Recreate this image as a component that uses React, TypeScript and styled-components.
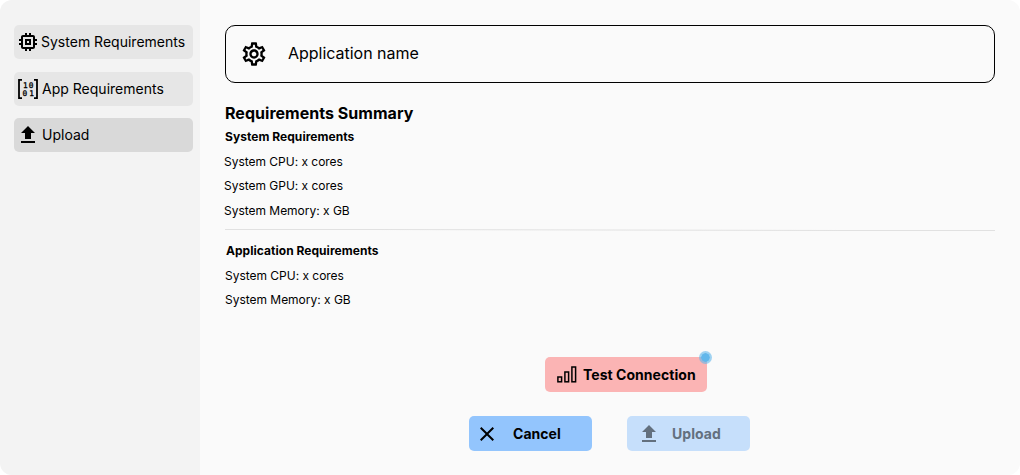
import React from "react";
import styled, { createGlobalStyle } from "styled-components";
import { MdClose, MdMemory, MdOutlineSettings, MdUpload } from "react-icons/md";

const GlobalStyle = createGlobalStyle`
  * { box-sizing: border-box; }
  body { margin: 0; background: #fff; font-family: Inter, "Liberation Sans", sans-serif; color: #000; }
  svg { display: block; flex: none; }
`;

const Shell = styled.div`
  display: flex;
  width: 1020px;
  height: 475px;
  border-radius: 12px;
  overflow: hidden;
  background: #fafafa;
`;

const Sidebar = styled.nav`
  display: flex;
  flex-direction: column;
  width: 200px;
  padding: 25px 7px 0 14px;
  background: #f3f3f3;
`;

const NavItem = styled.button<{ $active?: boolean; $gap: number; $inset: number; $after?: number }>`
  display: flex;
  align-items: center;
  flex: none;
  height: 34px;
  margin: 0 0 ${(p) => p.$after ?? 0}px;
  padding: 0 0 0 ${(p) => p.$inset}px;
  gap: ${(p) => p.$gap}px;
  border: 0;
  border-radius: 5px;
  background: ${(p) => (p.$active ? "#d9d9d9" : "#e6e6e6")};
  color: #000;
  font: 400 14px/17px Inter, sans-serif;
  letter-spacing: 0.01px;
  white-space: nowrap;
`;

const NavLabel = styled.span`
  padding-bottom: 2px;
`;

const Main = styled.main`
  flex: 1;
  padding: 25px 25px 0;
`;

const NameField = styled.div`
  display: flex;
  align-items: center;
  height: 58px;
  padding: 0 14px;
  gap: 20px;
  border: 1px solid #000;
  border-radius: 10px;
  font-size: 16px;
  line-height: 20px;
`;

const NameLabel = styled.span`
  padding-bottom: 2px;
  letter-spacing: -0.02px;
`;

const Title = styled.h1`
  margin: 20px 0 6px;
  font-size: 16px;
  line-height: 20px;
  font-weight: 700;
  letter-spacing: 0.03px;
`;

const Section = styled.section<{ $shift?: number }>`
  padding-left: ${(p) => p.$shift ?? 0}px;
`;

const SectionTitle = styled.h2`
  margin: 0;
  font-size: 12px;
  line-height: 15px;
  font-weight: 700;
  letter-spacing: 0.04px;
`;

const Specs = styled.ul`
  margin: 5.5px 0 0 -1px;
  padding: 0;
  list-style: none;
`;

const Spec = styled.li`
  font-size: 12px;
  line-height: 24.5px;
  letter-spacing: -0.02px;
`;

/* A hairline that drops by one pixel from its left end to its right end. */
const Divider = styled.hr`
  height: 2px;
  margin: 6px 0 12px;
  border: 0;
  background:
    linear-gradient(90deg, #e1e1e1, #e1e1e1 20%, transparent 80%) left top / 100% 1px no-repeat,
    linear-gradient(90deg, transparent 20%, #e1e1e1 80%) left bottom / 100% 1px no-repeat;
`;

const Actions = styled.div`
  display: flex;
  flex-direction: column;
  margin-top: 44.5px;
`;

const ActionRow = styled.div<{ $indent: number }>`
  display: flex;
  gap: 35px;
  margin-bottom: 24px;
  padding-left: ${(p) => p.$indent}px;
`;

const Button = styled.button<{ $fill: string; $width: number; $inset: number; $gap: number }>`
  position: relative;
  display: flex;
  align-items: center;
  width: ${(p) => p.$width}px;
  height: 35px;
  padding: 0 0 0 ${(p) => p.$inset}px;
  gap: ${(p) => p.$gap}px;
  border: 0;
  border-radius: 5px;
  background: ${(p) => p.$fill};
  color: #000;
  font: 700 14px/17px Inter, sans-serif;
  letter-spacing: 0.04px;
  white-space: nowrap;
  &:disabled { color: #63707e; }
`;

const StatusDot = styled.span`
  position: absolute;
  top: -6px;
  right: -5px;
  width: 13px;
  height: 13px;
  border: 2px solid rgba(98, 183, 235, 0.6);
  border-radius: 50%;
  background: #62b7eb;
  background-clip: padding-box;
`;

const BinaryIcon = () => (
  <svg width="20" height="20" viewBox="0 0 20 20">
    <path d="M4 .9H1v18.2h3M16 .9h3v18.2h-3" fill="none" stroke="#000" strokeWidth="1.8" />
    <g fontFamily="DejaVu Sans Mono, monospace" fontSize="7.8" textAnchor="middle" stroke="#000" strokeWidth=".3">
      <text x="7.3" y="8.8">1</text>
      <text x="13.2" y="8.8">0</text>
      <text x="6.8" y="16.9">0</text>
      <text x="13.5" y="16.9">1</text>
    </g>
  </svg>
);

const SignalIcon = () => (
  <svg width="20" height="17" viewBox="0 0 20 17" fill="none" stroke="#000" strokeWidth="1.5">
    <rect x=".9" y="11" width="3.7" height="4.8" />
    <rect x="7.9" y="6" width="3.7" height="9.8" />
    <rect x="14.9" y="1" width="3.7" height="14.8" />
  </svg>
);

export default function App() {
  return (
    <>
      <GlobalStyle />
      <Shell>
        <Sidebar>
          <NavItem $inset={2} $gap={1} $after={13}>
            <MdMemory size={24} />
            <NavLabel>System Requirements</NavLabel>
          </NavItem>
          <NavItem $inset={4} $gap={4} $after={12}>
            <BinaryIcon />
            <NavLabel>App Requirements</NavLabel>
          </NavItem>
          <NavItem $inset={2} $gap={2} $active>
            <MdUpload size={24} />
            <NavLabel>Upload</NavLabel>
          </NavItem>
        </Sidebar>
        <Main>
          <NameField>
            <MdOutlineSettings size={28} />
            <NameLabel>Application name</NameLabel>
          </NameField>
          <Title>Requirements Summary</Title>
          <Section>
            <SectionTitle>System Requirements</SectionTitle>
            <Specs>
              <Spec>System CPU: x cores</Spec>
              <Spec>System GPU: x cores</Spec>
              <Spec>System Memory: x GB</Spec>
            </Specs>
          </Section>
          <Divider />
          <Section $shift={1}>
            <SectionTitle>Application Requirements</SectionTitle>
            <Specs>
              <Spec>System CPU: x cores</Spec>
              <Spec>System Memory: x GB</Spec>
            </Specs>
          </Section>
          <Actions>
            <ActionRow $indent={320}>
              <Button $fill="#fbb4b4" $width={162} $inset={12} $gap={6}>
                <SignalIcon />
                Test Connection
                <StatusDot />
              </Button>
            </ActionRow>
            <ActionRow $indent={244}>
              <Button $fill="#93c5fd" $width={123} $inset={6} $gap={14}>
                <MdClose size={24} />
                Cancel
              </Button>
              <Button $fill="#c6dffb" $width={123} $inset={10} $gap={11} disabled>
                <MdUpload size={24} />
                Upload
              </Button>
            </ActionRow>
          </Actions>
        </Main>
      </Shell>
    </>
  );
}
